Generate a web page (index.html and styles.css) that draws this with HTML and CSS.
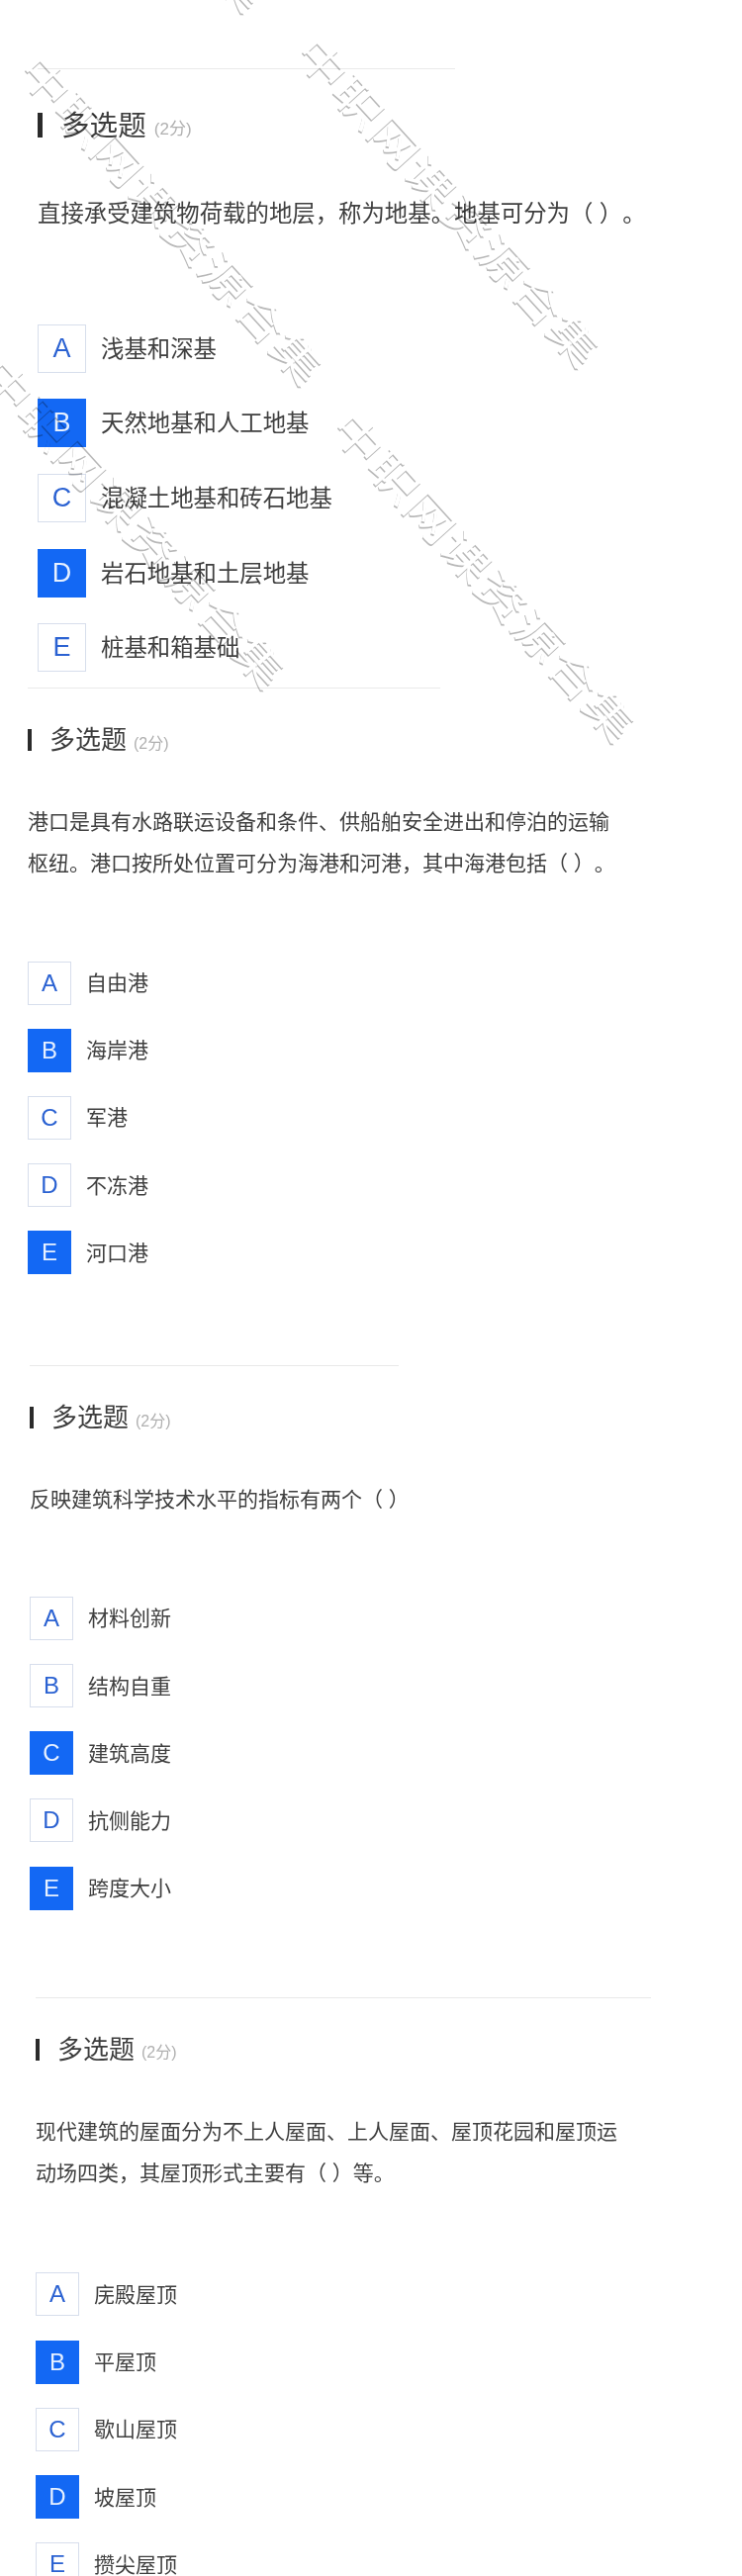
FILE: index.html

```html
<!DOCTYPE html>
<html lang="zh-CN">
<head>
    <meta charset="UTF-8">
    <title>多选题</title>
    <link rel="stylesheet" href="styles.css">
</head>
<body>
    <div class="page">
        <div class="quiz quiz-lg quiz-1">
            <div class="rule"></div>
            <div class="head"><span class="title">多选题</span><span class="score">(2分)</span></div>
            <p class="question">直接承受建筑物荷载的地层，称为地基。地基可分为（ ）。</p>
            <div class="options">
                <div class="option"><span class="letter">A</span><span class="text">浅基和深基</span></div>
                <div class="option"><span class="letter on">B</span><span class="text">天然地基和人工地基</span></div>
                <div class="option"><span class="letter">C</span><span class="text">混凝土地基和砖石地基</span></div>
                <div class="option"><span class="letter on">D</span><span class="text">岩石地基和土层地基</span></div>
                <div class="option"><span class="letter">E</span><span class="text">桩基和箱基础</span></div>
            </div>
        </div>

        <div class="quiz quiz-2">
            <div class="rule"></div>
            <div class="head"><span class="title">多选题</span><span class="score">(2分)</span></div>
            <p class="question">港口是具有水路联运设备和条件、供船舶安全进出和停泊的运输枢纽。港口按所处位置可分为海港和河港，其中海港包括（ ）。</p>
            <div class="options">
                <div class="option"><span class="letter">A</span><span class="text">自由港</span></div>
                <div class="option"><span class="letter on">B</span><span class="text">海岸港</span></div>
                <div class="option"><span class="letter">C</span><span class="text">军港</span></div>
                <div class="option"><span class="letter">D</span><span class="text">不冻港</span></div>
                <div class="option"><span class="letter on">E</span><span class="text">河口港</span></div>
            </div>
        </div>

        <div class="quiz quiz-3">
            <div class="rule"></div>
            <div class="head"><span class="title">多选题</span><span class="score">(2分)</span></div>
            <p class="question">反映建筑科学技术水平的指标有两个（ ）</p>
            <div class="options">
                <div class="option"><span class="letter">A</span><span class="text">材料创新</span></div>
                <div class="option"><span class="letter">B</span><span class="text">结构自重</span></div>
                <div class="option"><span class="letter on">C</span><span class="text">建筑高度</span></div>
                <div class="option"><span class="letter">D</span><span class="text">抗侧能力</span></div>
                <div class="option"><span class="letter on">E</span><span class="text">跨度大小</span></div>
            </div>
        </div>

        <div class="quiz quiz-4">
            <div class="rule"></div>
            <div class="head"><span class="title">多选题</span><span class="score">(2分)</span></div>
            <p class="question">现代建筑的屋面分为不上人屋面、上人屋面、屋顶花园和屋顶运动场四类，其屋顶形式主要有（ ）等。</p>
            <div class="options">
                <div class="option"><span class="letter">A</span><span class="text">庑殿屋顶</span></div>
                <div class="option"><span class="letter on">B</span><span class="text">平屋顶</span></div>
                <div class="option"><span class="letter">C</span><span class="text">歇山屋顶</span></div>
                <div class="option"><span class="letter on">D</span><span class="text">坡屋顶</span></div>
                <div class="option"><span class="letter">E</span><span class="text">攒尖屋顶</span></div>
            </div>
        </div>

        <!-- watermarks sit over the questions -->
        <span class="mark mark-0">中职网课资源合集</span>
        <span class="mark mark-1">中职网课资源合集</span>
        <span class="mark mark-2">中职网课资源合集</span>
        <span class="mark mark-3">中职网课资源合集</span>
        <span class="mark mark-4">中职网课资源合集</span>
    </div>
</body>
</html>
```

FILE: styles.css

```css
body {
    margin: 0;
    background: #fff;
    font-family: "Liberation Sans", "Noto Sans CJK SC", sans-serif;
    color: #3f3f3f;
    text-spacing-trim: space-all;
}

.page {
    position: relative;
    width: 750px;
    height: 2604px;
    padding-top: 69px;
    box-sizing: border-box;
    overflow: hidden;
}

.quiz {
    --font: 21px;
    --box: 44px;
    --letter: 24px;
    display: flex;
    flex-direction: column;
    align-items: flex-start;
}

.quiz-lg {
    --font: 23.4px;
    --box: 49px;
    --letter: 27px;
}

.quiz-1 { margin-left: 38px; }
.quiz-2 { margin-left: 28px; margin-top: 16px; }
.quiz-3 { margin-left: 30px; margin-top: 92px; }
.quiz-4 { margin-left: 36px; margin-top: 88px; }

.rule {
    height: 1px;
    background: #e9e9e9;
}

.quiz-1 .rule { width: 422px; }
.quiz-2 .rule { width: 417px; }
.quiz-3 .rule { width: 373px; }
.quiz-4 .rule { width: 622px; }

.head {
    display: flex;
    align-items: center;
    height: 22px;
    margin-top: 41px;
}

.head::before {
    content: "";
    width: 4px;
    height: 100%;
    margin-right: 18px;
    background: #2b2b2b;
}

.title {
    margin-top: -5px;
    font-size: 26px;
    color: #3d3d3d;
}

.score {
    margin-left: 7px;
    margin-top: 3px;
    font-size: 16px;
    color: #b0b0b0;
}

.quiz-lg .head {
    height: 25px;
    margin-top: 44px;
}

.quiz-lg .head::before {
    width: 5px;
    margin-right: 19px;
}

.quiz-lg .title { font-size: 28.6px; }
.quiz-lg .score { font-size: 17px; margin-left: 8px; }

.question {
    width: 600px;
    margin: 51px 0 0;
    font-size: var(--font);
    line-height: 41.6px;
}

.quiz-lg .question {
    width: 680px;
    margin-top: 57px;
}

.quiz-4 .question { line-height: 42.4px; }

.options {
    display: flex;
    flex-direction: column;
    gap: 24.2px;
    margin-top: 78px;
}

.quiz-lg .options {
    gap: 26.7px;
    margin-top: 90px;
}

.quiz-3 .options { margin-top: 77px; }
.quiz-4 .options { margin-top: 79px; }

.option {
    display: flex;
    align-items: center;
    font-size: var(--font);
}

.text {
    padding-bottom: 3px;
}

.letter {
    display: flex;
    align-items: center;
    justify-content: center;
    flex: none;
    width: var(--box);
    height: var(--box);
    margin-right: 15px;
    box-sizing: border-box;
    border: 1px solid #d7deec;
    font-size: var(--letter);
    color: #2b62d2;
}

.letter.on {
    border-color: #1368f4;
    background: #1368f4;
    color: #e6f0ff;
}

.mark {
    position: absolute;
    transform: translate(-50%, -50%) rotate(47.8deg) scaleY(.78);
    white-space: nowrap;
    font-size: 54px;
    line-height: 1;
    color: #fff;
    text-shadow: 1px 2px 0 #b8b8b8;
    mix-blend-mode: multiply;
    pointer-events: none;
}

.mark-0 { left: 114px; top: -155px; }
.mark-1 { left: 452px; top: 204px; }
.mark-2 { left: 488px; top: 583px; }
.mark-3 { left: 172px; top: 222px; }
.mark-4 { left: 134px; top: 529px; }
```
